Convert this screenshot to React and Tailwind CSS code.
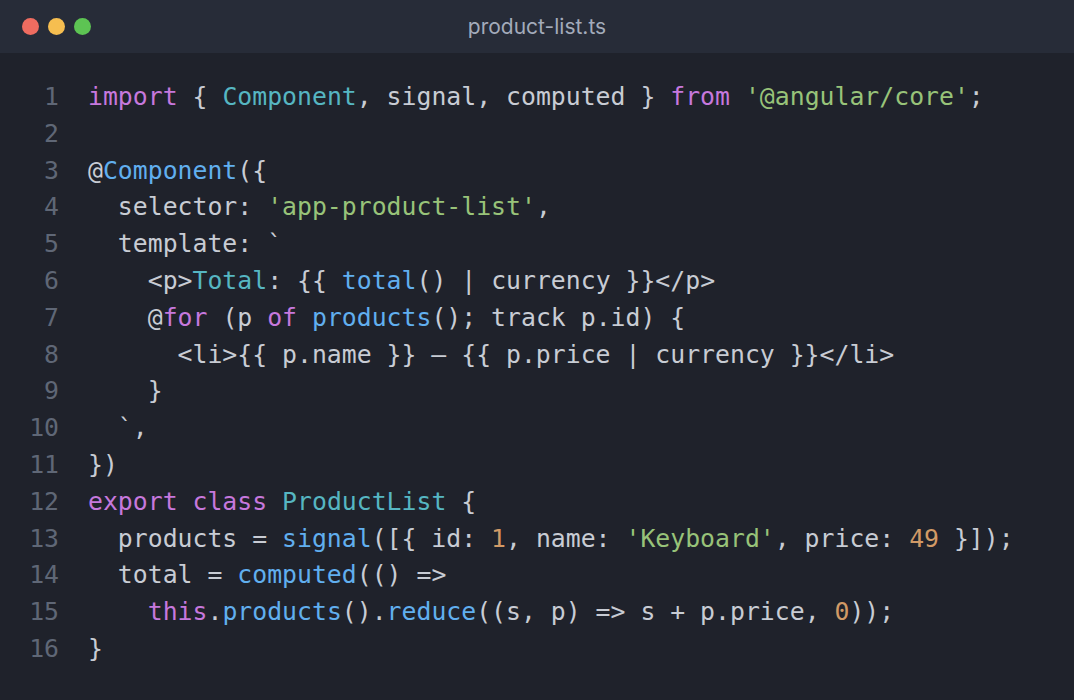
import React from "react";

const C = {
  t: "text-[#c8ccd4]",
  k: "text-[#c678dd]",
  c: "text-[#56b6c2]",
  f: "text-[#61afef]",
  s: "text-[#98c379]",
  n: "text-[#d19a66]",
};

// each line is a list of [kind, text]
const lines = [
  [["k", "import"], ["t", " { "], ["c", "Component"], ["t", ", signal, computed } "], ["k", "from"], ["t", " "], ["s", "'@angular/core'"], ["t", ";"]],
  [],
  [["t", "@"], ["f", "Component"], ["t", "({"]],
  [["t", "  selector: "], ["s", "'app-product-list'"], ["t", ","]],
  [["t", "  template: `"]],
  [["t", "    <p>"], ["c", "Total"], ["t", ": {{ "], ["f", "total"], ["t", "() | currency }}</p>"]],
  [["t", "    @"], ["k", "for"], ["t", " (p "], ["k", "of"], ["t", " "], ["f", "products"], ["t", "(); track p.id) {"]],
  [["t", "      <li>{{ p.name }} – {{ p.price | currency }}</li>"]],
  [["t", "    }"]],
  [["t", "  `,"]],
  [["t", "})"]],
  [["k", "export"], ["t", " "], ["k", "class"], ["t", " "], ["c", "ProductList"], ["t", " {"]],
  [["t", "  products = "], ["f", "signal"], ["t", "([{ id: "], ["n", "1"], ["t", ", name: "], ["s", "'Keyboard'"], ["t", ", price: "], ["n", "49"], ["t", " }]);"]],
  [["t", "  total = "], ["f", "computed"], ["t", "(() =>"]],
  [["t", "    "], ["k", "this"], ["t", "."], ["f", "products"], ["t", "()."], ["f", "reduce"], ["t", "((s, p) => s + p.price, "], ["n", "0"], ["t", "));"]],
  [["t", "}"]],
];

export default function App() {
  return (
    <div className="flex flex-col w-full h-[700px] bg-[#1f222b] overflow-hidden">
      {/* title bar */}
      <div className="relative flex items-center h-[53px] shrink-0 bg-[#272c38] pl-[22px]">
        <div className="flex items-center gap-[9px]">
          <span className="w-[17px] h-[17px] rounded-full bg-[#ef6c60]" />
          <span className="w-[17px] h-[17px] rounded-full bg-[#f6be50]" />
          <span className="w-[17px] h-[17px] rounded-full bg-[#5dc453]" />
        </div>
        <div className="absolute inset-0 flex items-center justify-center pointer-events-none">
          <span className="font-['Inter',sans-serif] text-[21px] text-[#a3abbb]">
            product-list.ts
          </span>
        </div>
      </div>

      {/* code */}
      <div className="pt-[26px] font-['DejaVu_Sans_Mono',monospace] text-[24.8px] leading-[36.8px] whitespace-pre">
        {lines.map((tokens, i) => (
          <div key={i} className="flex">
            <span className="w-[30px] ml-[29px] text-right text-[#5f6776]">{i + 1}</span>
            <span className="ml-[29px]">
              {tokens.map(([kind, text], j) => (
                <span key={j} className={C[kind]}>
                  {text}
                </span>
              ))}
            </span>
          </div>
        ))}
      </div>
    </div>
  );
}
